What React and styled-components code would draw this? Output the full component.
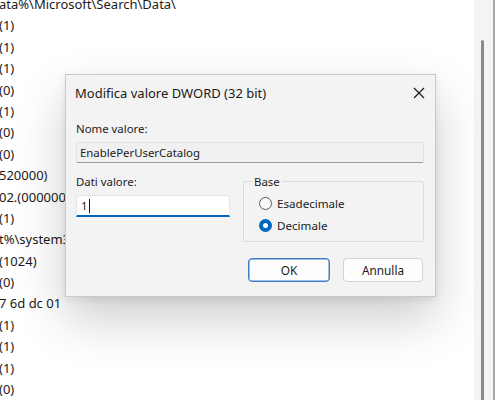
import React from "react";
import styled, { createGlobalStyle } from "styled-components";

const GlobalStyle = createGlobalStyle`
  html, body {
    margin: 0;
    padding: 0;
    background: #ffffff;
    overflow: hidden;
  }
  body {
    font-family: "Noto Sans", "Open Sans", sans-serif;
    color: #1b1b1b;
  }
`;

const rows = [
  "ata%\\Microsoft\\Search\\Data\\",
  "(1)",
  "(1)",
  "(1)",
  "(0)",
  "(1)",
  "(0)",
  "(0)",
  "520000)",
  "02.(0000000",
  "(1)",
  "t%\\system32",
  "(1024)",
  "(0)",
  "7 6d dc 01",
  "(1)",
  "(1)",
  "(1)",
  "(0)",
];

const App = () => {
  return (
    <>
      <GlobalStyle />
      <Page>
        <ValueList>
          {rows.map((r, i) => (
            <ValueRow key={i}>{r}</ValueRow>
          ))}
        </ValueList>
        <ScrollTrack>
          <ScrollThumb />
        </ScrollTrack>

        <Dialog>
          <TitleBar>
            <Title>Modifica valore DWORD (32 bit)</Title>
            <CloseButton aria-label="Chiudi">
              <svg width="12" height="12" viewBox="0 0 12 12">
                <path
                  d="M1 1 L11 11 M11 1 L1 11"
                  stroke="#1b1b1b"
                  strokeWidth="1.2"
                  fill="none"
                />
              </svg>
            </CloseButton>
          </TitleBar>
          <Body>
            <Label>Nome valore:</Label>
            <ReadField>EnablePerUserCatalog</ReadField>
            <Columns>
              <DataColumn>
                <Label>Dati valore:</Label>
                <ValueInput>
                  1<Caret />
                </ValueInput>
              </DataColumn>
              <GroupBox>
                <Legend>Base</Legend>
                <RadioRow>
                  <Radio />
                  <span>Esadecimale</span>
                </RadioRow>
                <RadioRow>
                  <Radio checked />
                  <span>Decimale</span>
                </RadioRow>
              </GroupBox>
            </Columns>
            <Buttons>
              <Button primary>OK</Button>
              <Button>Annulla</Button>
            </Buttons>
          </Body>
        </Dialog>
      </Page>
    </>
  );
};

const Page = styled.div`
  position: relative;
  width: 495px;
  height: 400px;
  overflow: hidden;
  display: flex;
`;

const ValueList = styled.div`
  flex: 1;
  margin-top: -6px;
  margin-left: -1px;
  font-size: 13px;
`;

const ValueRow = styled.div`
  height: 21.4px;
  line-height: 21.4px;
  white-space: nowrap;
`;

const ScrollTrack = styled.div`
  width: 19px;
  background: #f4f4f4;
  border-right: 2px solid #a8a8a8;
  display: flex;
  padding-top: 40px;
`;

const ScrollThumb = styled.div`
  width: 3px;
  margin-left: 7px;
  background: #8a8a8a;
  border-radius: 2px 2px 0 0;
`;

const Dialog = styled.div`
  position: absolute;
  left: 65px;
  top: 74px;
  width: 371px;
  height: 223px;
  box-sizing: border-box;
  background: #f3f3f3;
  border: 1px solid #c9c9c9;
  box-shadow: 0 22px 48px rgba(0, 0, 0, 0.2), 0 3px 8px rgba(0, 0, 0, 0.08);
  display: flex;
  flex-direction: column;
`;

const TitleBar = styled.div`
  height: 35px;
  display: flex;
  align-items: center;
  justify-content: space-between;
  padding: 0 6px 0 9px;
`;

const Title = styled.div`
  font-size: 13px;
  color: #1b1b1b;
`;

const CloseButton = styled.div`
  width: 20px;
  height: 20px;
  display: flex;
  align-items: center;
  justify-content: center;
`;

const Body = styled.div`
  padding: 11px 11px 0 10px;
  display: flex;
  flex-direction: column;
`;

const Label = styled.div`
  font-size: 11.4px;
  line-height: 16px;
  color: #1b1b1b;
  margin-bottom: 5px;
`;

const ReadField = styled.div`
  height: 21px;
  box-sizing: border-box;
  background: #f0f0f0;
  border: 1px solid #e2e2e2;
  border-bottom-color: #9a9a9a;
  border-radius: 2px;
  font-size: 11.4px;
  line-height: 19px;
  padding-left: 3px;
`;

const Columns = styled.div`
  display: flex;
  gap: 13px;
  margin-top: 11px;
`;

const DataColumn = styled.div`
  width: 154px;
  display: flex;
  flex-direction: column;
`;

const ValueInput = styled.div`
  height: 22px;
  box-sizing: border-box;
  background: #ffffff;
  border: 1px solid #e4e4e4;
  border-bottom: 2px solid #0067c0;
  border-radius: 3px 3px 0 0;
  font-size: 11.4px;
  line-height: 19px;
  padding-left: 4px;
  display: flex;
  align-items: center;
`;

const Caret = styled.span`
  display: inline-block;
  width: 1px;
  height: 14px;
  background: #1b1b1b;
  margin-left: 1px;
`;

const GroupBox = styled.fieldset`
  flex: 1;
  margin: 0;
  padding: 6px 8px 4px 15px;
  border: 1px solid #dcdcdc;
  border-radius: 2px;
  height: 68px;
  box-sizing: border-box;
  display: flex;
  flex-direction: column;
  gap: 6px;
`;

const Legend = styled.legend`
  font-size: 11.4px;
  padding: 0 2px;
  margin-left: -7px;
  color: #1b1b1b;
`;

const RadioRow = styled.div`
  display: flex;
  align-items: center;
  gap: 5px;
  font-size: 11.6px;
  height: 16px;
`;

const Radio = styled.span`
  width: 13px;
  height: 13px;
  box-sizing: border-box;
  border-radius: 50%;
  background: ${(p) => (p.checked ? "#0067c0" : "#fafafa")};
  border: ${(p) => (p.checked ? "none" : "1px solid #5a5a5a")};
  display: flex;
  align-items: center;
  justify-content: center;
  &::after {
    content: "";
    display: ${(p) => (p.checked ? "block" : "none")};
    width: 5px;
    height: 5px;
    border-radius: 50%;
    background: #ffffff;
  }
`;

const Buttons = styled.div`
  display: flex;
  justify-content: flex-end;
  gap: 13px;
  margin-top: 16px;
  padding-right: 1px;
`;

const Button = styled.div`
  width: 80px;
  height: 24px;
  box-sizing: border-box;
  background: #fdfdfd;
  border: 1px solid ${(p) => (p.primary ? "#3c7fc4" : "#d2d2d2")};
  box-shadow: ${(p) => (p.primary ? "inset 0 0 0 0.5px #3c7fc4" : "none")};
  border-radius: 4px;
  font-size: 11.8px;
  display: flex;
  align-items: center;
  justify-content: center;
  color: #1b1b1b;
  &:first-child {
    width: 82px;
  }
`;

export default App;
